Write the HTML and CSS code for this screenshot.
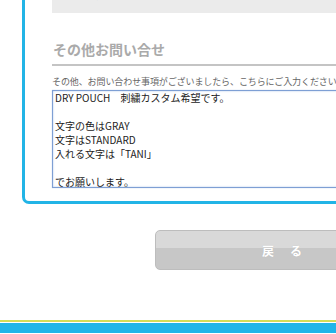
FILE: index.html
```html
<!DOCTYPE html>
<html lang="ja">
<head>
	<meta charset="UTF-8">
	<title>お問い合せ内容の確認</title>
	<link rel="stylesheet" href="styles.css">
</head>
<body>
	<div class="form">
		<div class="note">
			<p>※ご入力いただいた内容をご確認の上、お間違いがなければ送信ボタンを押してください。</p>
		</div>
		<h2 class="ttl">その他お問い合せ</h2>
		<p class="lead">その他、お問い合わせ事項がございましたら、こちらにご入力ください。</p>
		<textarea class="msg" name="other">DRY POUCH　刺繍カスタム希望です。

文字の色はGRAY
文字はSTANDARD
入れる文字は「TANI」

でお願いします。</textarea>
	</div>
	<div class="actions">
		<button class="back" type="button">戻　る</button>
	</div>
	<div class="foot-line"></div>
	<div class="foot"></div>
</body>
</html>
```

FILE: styles.css
```css
html,body{
	margin: 0;padding: 0;overflow: hidden;background: #fff;
}
body{
	font-family: "Noto Sans CJK JP", "Noto Sans", sans-serif;color: #333;width: 336px;height: 334px;
}
.form{
	width: 420px;margin: -20px 0 0 22px;padding: 17px 0 13px 27px;border: 3px solid #22b4e6;border-radius: 7px;box-sizing: content-box;
}
.note{
	height: 13px;overflow: hidden;background: #ebebeb;
}
.note p{
	margin: -11px 0 0 14px;font-size: 10px;line-height: 12px;color: #aaa;white-space: nowrap;
}
.ttl{
	margin: 27px 0 0;padding: 0 0 6px 1px;font-size: 14px;line-height: 18px;font-weight: bold;color: #aaa;border-bottom: 2px solid #c4c4c4;
}
.lead{
	margin: 10px 0 0;font-size: 9px;line-height: 12px;color: #666;white-space: nowrap;letter-spacing: -0.1px;
}
.msg{
	display: block;width: 330px;height: 98px;margin: 2px 0 0;padding: 0 2px;box-sizing: border-box;resize: none;overflow: hidden;
	font-family: "Noto Sans CJK JP", "Noto Sans", sans-serif;font-size: 10px;line-height: 14px;color: #222;
	border: 1px solid #7e9fd4;box-shadow: inset 0 0 2px #a9c0e6, 0 0 1px #b9cbe8;background: #fff;outline: none;
}
.actions{
	padding: 26px 0 0 155px;
}
.back{
	display: block;width: 256px;height: 40px;padding: 0;border: 1px solid #bdbdbd;border-radius: 5px;
	background: linear-gradient(#d9d9d9 0, #d9d9d9 45%, #c7c7c7 45%, #c7c7c7 100%);
	font-family: "Noto Sans CJK JP", "Noto Sans", sans-serif;font-size: 12px;font-weight: bold;color: #fff;letter-spacing: 2px;
	text-shadow: 0 0 1px #bbb;
}
.foot-line{
	height: 2px;margin-top: 50px;background: #d3dc58;
}
.foot{
	height: 10px;margin-top: 1px;background: #1fb5e8;
}
```
